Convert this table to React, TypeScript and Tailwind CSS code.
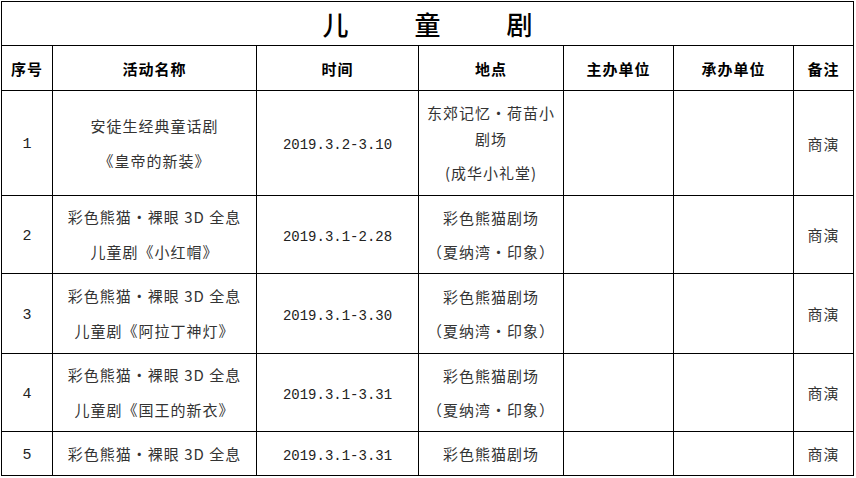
import React from 'react';

type Row = {
  no: string;
  name: string[];
  time: string;
  place: string[];
  note: string;
  h: string;
};

const rows: Row[] = [
  {
    no: '1',
    name: ['安徒生经典童话剧', '《皇帝的新装》'],
    time: '2019.3.2-3.10',
    place: ['东郊记忆·荷苗小剧场', '(成华小礼堂)'],
    note: '商演',
    h: 'h-[105px]',
  },
  {
    no: '2',
    name: ['彩色熊猫·裸眼 3D 全息', '儿童剧《小红帽》'],
    time: '2019.3.1-2.28',
    place: ['彩色熊猫剧场', '（夏纳湾·印象）'],
    note: '商演',
    h: 'h-[78px]',
  },
  {
    no: '3',
    name: ['彩色熊猫·裸眼 3D 全息', '儿童剧《阿拉丁神灯》'],
    time: '2019.3.1-3.30',
    place: ['彩色熊猫剧场', '（夏纳湾·印象）'],
    note: '商演',
    h: 'h-[80px]',
  },
  {
    no: '4',
    name: ['彩色熊猫·裸眼 3D 全息', '儿童剧《国王的新衣》'],
    time: '2019.3.1-3.31',
    place: ['彩色熊猫剧场', '（夏纳湾·印象）'],
    note: '商演',
    h: 'h-[78px]',
  },
  {
    no: '5',
    name: ['彩色熊猫·裸眼 3D 全息'],
    time: '2019.3.1-3.31',
    place: ['彩色熊猫剧场'],
    note: '商演',
    h: 'h-[44px]',
  },
];

const headers = ['序号', '活动名称', '时间', '地点', '主办单位', '承办单位', '备注'];

const cell = 'border border-black p-0 text-center align-middle';

export default function App() {
  return (
    <div className="w-[856px] h-[478px] overflow-hidden bg-white pl-px pt-px font-['Noto_Sans_CJK_SC',sans-serif]">
      <table className="table-fixed border-collapse w-[852px]">
        <colgroup>
          <col className="w-[51px]" />
          <col className="w-[204px]" />
          <col className="w-[162px]" />
          <col className="w-[145px]" />
          <col className="w-[110px]" />
          <col className="w-[120px]" />
          <col className="w-[60px]" />
        </colgroup>
        <tbody>
          {/* Title row */}
          <tr className="h-[44px]">
            <td colSpan={7} className={cell}>
              <div className="flex justify-center gap-[66px] text-[26px] leading-none font-medium text-black">
                <span>儿</span>
                <span>童</span>
                <span>剧</span>
              </div>
            </td>
          </tr>

          {/* Column headers */}
          <tr className="h-[45px]">
            {headers.map((h) => (
              <td key={h} className={cell}>
                <span className="text-[15px] font-bold tracking-[1px] text-black">{h}</span>
              </td>
            ))}
          </tr>

          {rows.map((r) => (
            <tr key={r.no} className={r.h}>
              <td className={cell}>
                <span className="font-['Liberation_Mono',monospace] text-[15px] text-[#222]">{r.no}</span>
              </td>
              <td className={cell}>
                <div className="flex flex-col gap-[9px] px-2 text-[15px] leading-[26px] tracking-[1px] text-[#333]">
                  {r.name.map((line) => (
                    <p key={line}>{line}</p>
                  ))}
                </div>
              </td>
              <td className={cell}>
                <span className="font-['Liberation_Mono',monospace] text-[14px] text-[#222]">{r.time}</span>
              </td>
              <td className={cell}>
                <div className="flex flex-col gap-[8px] px-1 text-[15px] leading-[26px] tracking-[1px] text-[#333]">
                  {r.place.map((line) => (
                    <p key={line}>{line}</p>
                  ))}
                </div>
              </td>
              <td className={cell} />
              <td className={cell} />
              <td className={cell}>
                <span className="text-[15px] tracking-[1px] text-[#333]">{r.note}</span>
              </td>
            </tr>
          ))}
        </tbody>
      </table>
    </div>
  );
}
